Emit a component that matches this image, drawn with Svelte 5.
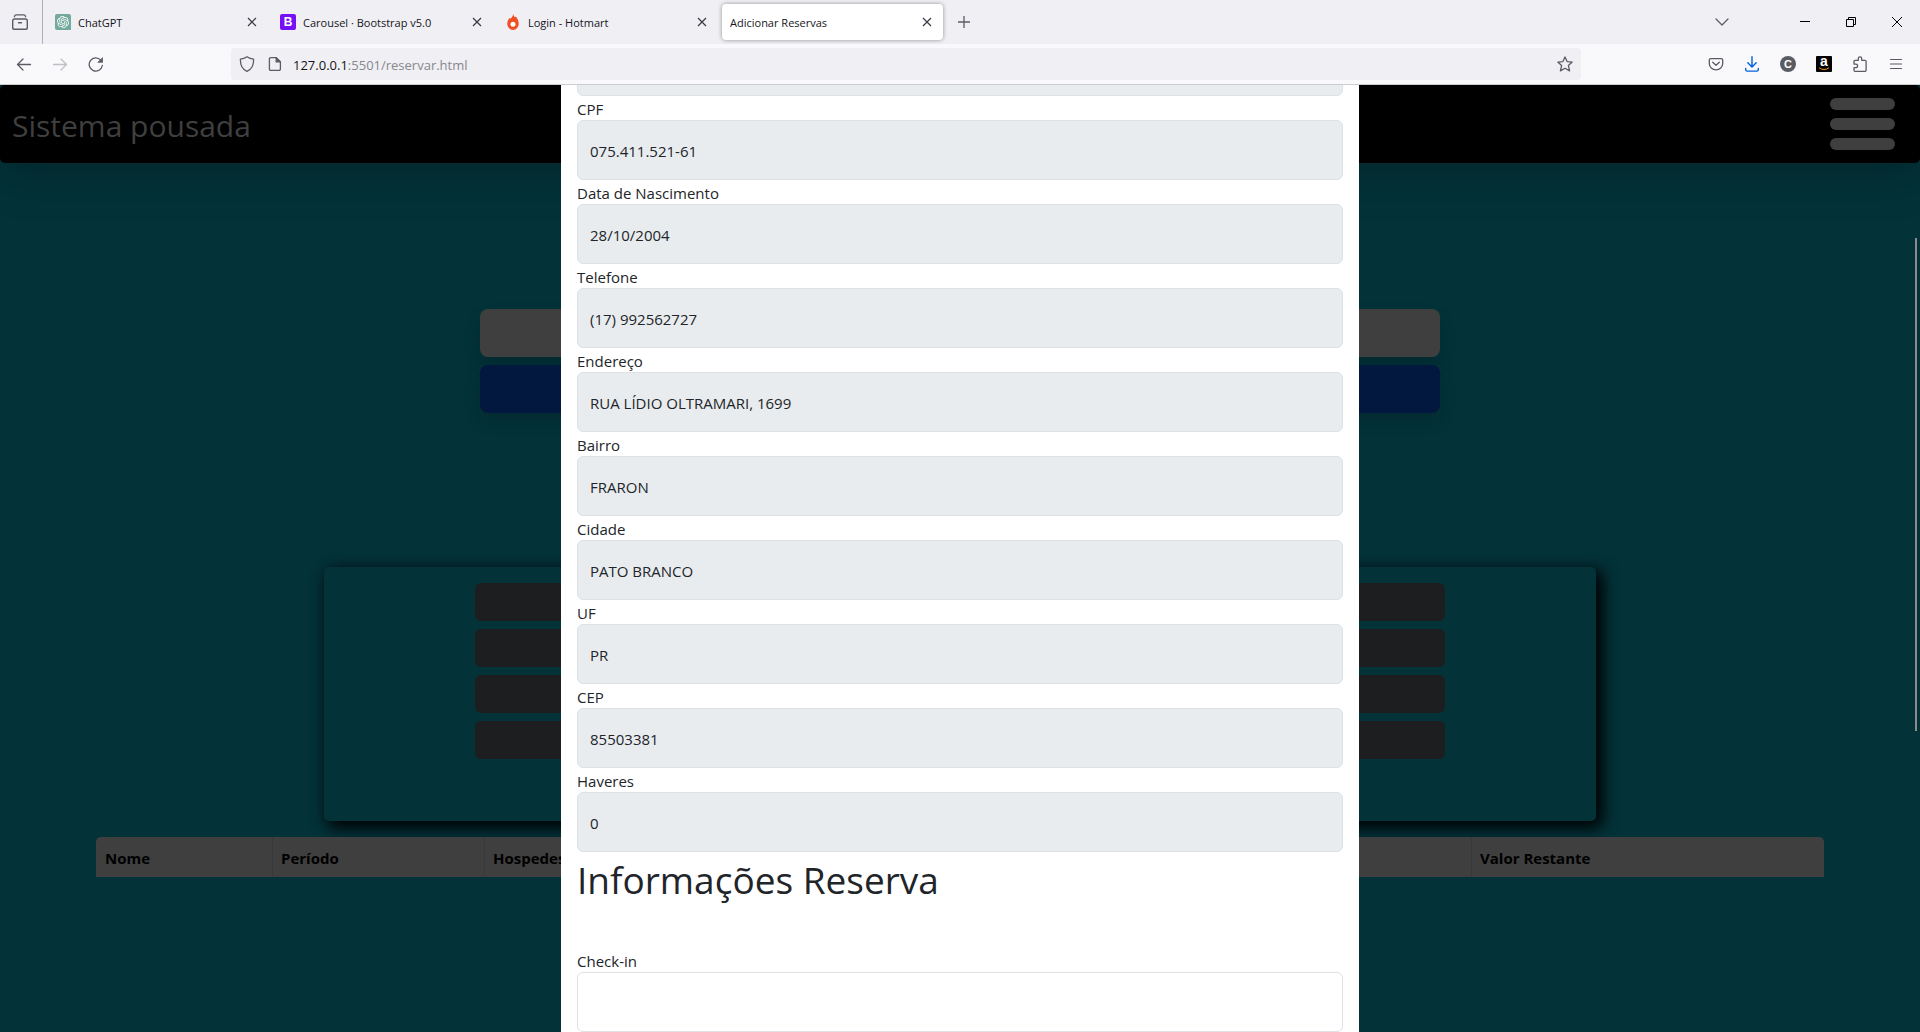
<script>
  const tabs = [
    { title: 'ChatGPT', icon: 'gpt' },
    { title: 'Carousel · Bootstrap v5.0', icon: 'bootstrap' },
    { title: 'Login - Hotmart', icon: 'hotmart' },
    { title: 'Adicionar Reservas', icon: null, active: true }
  ];

  const fields = [
    { id: 'cpf', label: 'CPF', value: '075.411.521-61' },
    { id: 'nascimento', label: 'Data de Nascimento', value: '28/10/2004' },
    { id: 'telefone', label: 'Telefone', value: '(17) 992562727' },
    { id: 'endereco', label: 'Endereço', value: 'RUA LÍDIO OLTRAMARI, 1699' },
    { id: 'bairro', label: 'Bairro', value: 'FRARON' },
    { id: 'cidade', label: 'Cidade', value: 'PATO BRANCO' },
    { id: 'uf', label: 'UF', value: 'PR' },
    { id: 'cep', label: 'CEP', value: '85503381' },
    { id: 'haveres', label: 'Haveres', value: '0' }
  ];

  let checkin = $state('');
</script>

<div class="window">
  <div class="tabbar">
    <button class="view" aria-label="Firefox View">
      <svg width="16" height="16" viewBox="0 0 16 16" fill="none" stroke="#5b5b66" stroke-linecap="round">
        <path d="M2.400 2.800c.1-1.200.9-1.900 2.100-1.900h7c1.200 0 2 .7 2.100 1.900" stroke-width="1.300" />
        <path d="M2.600 5h10.800a1.900 1.900 0 0 1 1.900 1.900v6.500a1.900 1.900 0 0 1-1.900 1.900H2.600A1.900 1.900 0 0 1 .7 13.400V6.900A1.900 1.900 0 0 1 2.600 5z" stroke-width="1.400" />
        <path d="M6.500 8.700h3" stroke-width="1.400" />
      </svg>
    </button>
    <div class="tabs">
      {#each tabs as tab}
        <div class="tab" class:active={tab.active}>
          {#if tab.icon === 'gpt'}
            <svg width="16" height="16" viewBox="0 0 16 16">
              <path d="M2 0h12a2 2 0 0 1 2 2v14H2a2 2 0 0 1-2-2V2a2 2 0 0 1 2-2z" fill="#74aa9c" />
              <g transform="translate(2 2) scale(.5)">
                <path fill="#fff" d="M22.2819 9.8211a5.9847 5.9847 0 0 0-.5157-4.9108 6.0462 6.0462 0 0 0-6.5098-2.9A6.0651 6.0651 0 0 0 4.9807 4.1818a5.9847 5.9847 0 0 0-3.9977 2.9 6.0462 6.0462 0 0 0 .7427 7.0966 5.98 5.98 0 0 0 .511 4.9107 6.051 6.051 0 0 0 6.5146 2.9001A5.9847 5.9847 0 0 0 13.2599 24a6.0557 6.0557 0 0 0 5.7718-4.2058 5.9894 5.9894 0 0 0 3.9977-2.9001 6.0557 6.0557 0 0 0-.7475-7.0729zm-9.022 12.6081a4.4755 4.4755 0 0 1-2.8764-1.0408l.1419-.0804 4.7783-2.7582a.7948.7948 0 0 0 .3927-.6813v-6.7369l2.02 1.1686a.071.071 0 0 1 .038.052v5.5826a4.504 4.504 0 0 1-4.4945 4.4944zm-9.6607-4.1254a4.4708 4.4708 0 0 1-.5346-3.0137l.142.0852 4.783 2.7582a.7712.7712 0 0 0 .7806 0l5.8428-3.3685v2.3324a.0804.0804 0 0 1-.0332.0615L9.74 19.9502a4.4992 4.4992 0 0 1-6.1408-1.6464zM2.3408 7.8956a4.485 4.485 0 0 1 2.3655-1.9728V11.6a.7664.7664 0 0 0 .3879.6765l5.8144 3.3543-2.0201 1.1685a.0757.0757 0 0 1-.071 0l-4.8303-2.7865A4.504 4.504 0 0 1 2.3408 7.872zm16.5963 3.8558L13.1038 8.364 15.1192 7.2a.0757.0757 0 0 1 .071 0l4.8303 2.7913a4.4944 4.4944 0 0 1-.6765 8.1042v-5.6772a.79.79 0 0 0-.407-.667zm2.0107-3.0231l-.142-.0852-4.7735-2.7818a.7759.7759 0 0 0-.7854 0L9.409 9.2297V6.8974a.0662.0662 0 0 1 .0284-.0615l4.8303-2.7866a4.4992 4.4992 0 0 1 6.6802 4.66zM8.3065 12.863l-2.02-1.1638a.0804.0804 0 0 1-.038-.0567V6.0742a4.4992 4.4992 0 0 1 7.3757-3.4537l-.142.0805L8.704 5.459a.7948.7948 0 0 0-.3927.6813zm1.0976-2.3654l2.602-1.4998 2.6069 1.4998v2.9994l-2.5974 1.4997-2.6067-1.4997Z" />
              </g>
            </svg>
          {:else if tab.icon === 'bootstrap'}
            <span class="bs" aria-hidden="true">B</span>
          {:else if tab.icon === 'hotmart'}
            <svg width="16" height="16" viewBox="0 0 16 16">
              <path d="M8.200 0c.3 1.600 1 2.500 1.900 3.300l.7-.9c1.600 1.800 2.900 4.500 2.900 7.200A5.700 6.100 0 0 1 8 16a5.700 6.100 0 0 1-5.700-6.400c0-2.500 1-4.300 2.200-5.700l.6.9C6.800 3.700 8 2.200 8.200 0z" fill="#f04e23" />
              <circle cx="8" cy="10.200" r="2.500" fill="#fff" />
            </svg>
          {/if}
          <span class="title">{tab.title}</span>
          <button class="close" aria-label="Fechar aba">
            <svg width="10" height="10" viewBox="0 0 10 10"><path d="M1 1l8 8M9 1L1 9" stroke="#3a3944" stroke-width="1.200" /></svg>
          </button>
        </div>
      {/each}
      <button class="plus" aria-label="Nova aba">
        <svg width="12" height="12" viewBox="0 0 12 12"><path d="M6 0v12M0 6h12" stroke="#5b5b66" stroke-width="1.300" /></svg>
      </button>
    </div>
    <button class="alltabs" aria-label="Listar abas">
      <svg width="14" height="8" viewBox="0 0 14 8" fill="none" stroke="#5b5b66" stroke-width="1.300" stroke-linecap="round" stroke-linejoin="round"><path d="M1 1l6 6 6-6" /></svg>
    </button>
    <div class="wincontrols">
      <button aria-label="Minimizar">
        <svg width="10" height="10" viewBox="0 0 10 10"><path d="M0 4.500h10" stroke="#000" /></svg>
      </button>
      <button aria-label="Restaurar">
        <svg width="10" height="10" viewBox="0 0 10 10" fill="none" stroke="#000"><path d="M.5 2.500h7v7h-7zM2.500 2.500v-2h7v7h-2" /></svg>
      </button>
      <button aria-label="Fechar">
        <svg width="10" height="10" viewBox="0 0 10 10"><path d="M0 0l10 10M10 0L0 10" stroke="#000" /></svg>
      </button>
    </div>
  </div>

  <div class="toolbar">
    <button class="tool" aria-label="Voltar">
      <svg width="16" height="16" viewBox="0 0 16 16" fill="none" stroke="#5b5b66" stroke-width="1.300" stroke-linecap="round" stroke-linejoin="round"><path d="M14.500 8.500H1.600M7 3L1.500 8.500 7 14" /></svg>
    </button>
    <button class="tool" aria-label="Avançar">
      <svg width="16" height="16" viewBox="0 0 16 16" fill="none" stroke="#bfbfc6" stroke-width="1.300" stroke-linecap="round" stroke-linejoin="round"><path d="M1.500 8.500h12.900M9 3l5.500 5.500L9 14" /></svg>
    </button>
    <button class="tool" aria-label="Recarregar">
      <svg width="16" height="16" viewBox="0 0 16 16" fill="none" stroke="#5b5b66" stroke-width="1.300" stroke-linecap="round"><path d="M14.300 9.500A6.600 6.600 0 1 1 12.800 4.200" /><path d="M14.500 2v4.300h-4.300z" fill="#5b5b66" stroke-linejoin="round" stroke-width=".8" /></svg>
    </button>
    <div class="urlbar">
      <svg width="16" height="16" viewBox="0 0 16 16" fill="none" stroke="#5b5b66" stroke-width="1.300" stroke-linejoin="round"><path d="M8 .8c2 1.400 4.200 2.200 6.600 2.400.2 6-2 10.200-6.600 12.100C3.400 13.400 1.200 9.200 1.400 3.200 3.800 3 6 2.200 8 .8z" /></svg>
      <svg width="16" height="16" viewBox="0 0 16 16" fill="none" stroke="#5b5b66" stroke-width="1.300" stroke-linejoin="round"><path d="M3.600 1.700h5.600l4.200 4.200v7.200a1.200 1.200 0 0 1-1.200 1.200H3.600a1.200 1.200 0 0 1-1.200-1.200V2.900a1.200 1.200 0 0 1 1.200-1.200z" /><path d="M9.200 1.700l4.200 4.200H9.200z" fill="#5b5b66" /></svg>
      <span class="url">127.0.0.1<span>:5501/reservar.html</span></span>
      <button class="star" aria-label="Favoritar">
        <svg width="16" height="16" viewBox="0 0 16 16" fill="none" stroke="#5b5b66" stroke-width="1.300" stroke-linejoin="round"><path d="M8 .9l2.100 4.700 5.100.5-3.800 3.500 1.200 5.300L8 12.300l-4.600 2.600 1.200-5.300L.8 6.100l5.100-.5z" /></svg>
      </button>
    </div>
    <button class="tool" aria-label="Pocket">
      <svg width="16" height="16" viewBox="0 0 16 16" fill="none" stroke="#5b5b66" stroke-width="1.300" stroke-linecap="round" stroke-linejoin="round"><path d="M2.800 2.600h10.400a1.500 1.500 0 0 1 1.500 1.500v3.400a6.700 6.300 0 0 1-13.400 0V4.100a1.500 1.500 0 0 1 1.500-1.500z" /><path d="M4.700 6.200L8 9.300l3.300-3.100" /></svg>
    </button>
    <button class="tool" aria-label="Downloads">
      <svg width="16" height="16" viewBox="0 0 16 16" fill="none" stroke="#0061e0" stroke-width="1.400" stroke-linecap="round" stroke-linejoin="round"><path d="M8 .8v9.800M3.800 6.800L8 11l4.200-4.200M1.700 12.500v1a1.600 1.600 0 0 0 1.600 1.600h9.400a1.600 1.600 0 0 0 1.600-1.600v-1" /></svg>
    </button>
    <button class="tool" aria-label="Conta"><span class="account">C</span></button>
    <button class="tool" aria-label="Amazon">
      <span class="amazon">a<svg width="12" height="4" viewBox="0 0 12 4" fill="none" stroke="#f90"><path d="M1 .8q5 3.400 10 0" /></svg></span>
    </button>
    <button class="tool" aria-label="Extensões">
      <svg width="16" height="16" viewBox="0 0 16 16" fill="none" stroke="#5b5b66" stroke-width="1.300" stroke-linejoin="round"><path d="M2 7V5.300a1 1 0 0 1 1-1h3.300V2.500a1.700 1.700 0 0 1 3.400 0v1.800h3.400a1 1 0 0 1 1 1v9a1 1 0 0 1-1 1H3a1 1 0 0 1-1-1v-2.600h1.800a1.600 1.600 0 0 0 0-3.600H2z" /></svg>
    </button>
    <button class="tool" aria-label="Menu">
      <svg width="16" height="16" viewBox="0 0 16 16" stroke="#5b5b66" stroke-width="1.200" stroke-linecap="round"><path d="M2.500 3.500h11M2.500 8h11M2.500 12.500h11" /></svg>
    </button>
  </div>

  <div class="page">
    <header class="navbar">
      <span class="brand">Sistema pousada</span>
      <button class="burger" aria-label="Abrir menu"><i></i><i></i><i></i></button>
    </header>

    <div class="search">
      <input type="text" aria-label="Pesquisar" />
      <button aria-label="Buscar"></button>
    </div>

    <div class="panel">
      <button aria-label="Opção 1"></button>
      <button aria-label="Opção 2"></button>
      <button aria-label="Opção 3"></button>
      <button aria-label="Opção 4"></button>
    </div>

    <table>
      <colgroup><col class="c1" /><col class="c2" /><col /><col class="c4" /></colgroup>
      <thead>
        <tr><th>Nome</th><th>Período</th><th>Hospedes</th><th>Valor Restante</th></tr>
      </thead>
    </table>

    <div class="overlay">
      <form class="modal">
        <input type="text" aria-label="Nome" readonly />
        {#each fields as f}
          <label for={f.id}>{f.label}</label>
          <input id={f.id} type="text" value={f.value} readonly />
        {/each}
        <h1>Informações Reserva</h1>
        <label for="checkin">Check-in</label>
        <input id="checkin" type="text" bind:value={checkin} />
      </form>
    </div>
    <div class="scrollthumb"></div>
  </div>
</div>

<style>
  :global(body) {
    margin: 0;
  }

  .window {
    display: flex;
    flex-direction: column;
    height: 100vh;
    overflow: hidden;
    font-family: 'Open Sans', 'Noto Sans', sans-serif;
    color: #212529;
  }

  .window * {
    box-sizing: border-box;
  }

  button {
    border: 0;
    padding: 0;
    background: none;
    font: inherit;
    color: inherit;
    display: flex;
    align-items: center;
    justify-content: center;
  }

  svg {
    flex: none;
    display: block;
  }

  /* Browser tab strip */
  .tabbar {
    display: flex;
    height: 44px;
    flex: none;
    background: #f0f0f4;
    font-size: 11px;
    color: #15141a;
  }

  .view {
    width: 43px;
    padding-right: 3px;
    border-right: 1px solid #b0b0b6;
  }

  .tabs {
    display: flex;
    flex: 1;
    min-width: 0;
    padding: 4px 0;
    gap: 4px;
    margin-left: 4px;
  }

  .tab {
    display: flex;
    align-items: center;
    gap: 7px;
    width: 221px;
    height: 36px;
    padding: 0 4px 0 8px;
    border-radius: 4px;
  }

  .tab.active {
    background: #fff;
    box-shadow: 0 0 4px rgba(0, 0, 0, 0.4);
  }

  .title {
    flex: 1;
    padding-top: 1px;
    white-space: nowrap;
    overflow: hidden;
  }

  .close {
    width: 24px;
    height: 24px;
  }

  .bs {
    width: 16px;
    height: 16px;
    border-radius: 2px;
    background: #7711f5;
    color: #fff;
    font-family: 'Liberation Sans', sans-serif;
    font-size: 12px;
    line-height: 16px;
    font-weight: 700;
    text-align: center;
  }

  .plus {
    width: 34px;
    height: 36px;
  }

  .alltabs {
    width: 40px;
    margin-right: 40px;
  }

  .wincontrols {
    display: flex;
  }

  .wincontrols button {
    width: 46px;
  }

  /* Browser toolbar */
  .toolbar {
    display: flex;
    align-items: center;
    gap: 4px;
    height: 41px;
    flex: none;
    padding: 0 8px;
    background: #f9f9fb;
    border-bottom: 1px solid #cccccf;
  }

  .tool {
    width: 32px;
    height: 32px;
    flex: none;
  }

  .urlbar {
    display: flex;
    align-items: center;
    flex: 1;
    min-width: 0;
    height: 32px;
    margin: 0 115px;
    padding: 0 8px;
    gap: 12px;
    border-radius: 4px;
    background: #f0f0f4;
  }

  .url {
    flex: 1;
    margin-left: -2px;
    padding-top: 2px;
    font-size: 13px;
    color: #15141a;
    white-space: nowrap;
  }

  .url span {
    color: #87878e;
  }

  .account {
    width: 16px;
    height: 16px;
    border-radius: 50%;
    background: #5b5b66;
    color: #fff;
    font-family: 'Liberation Sans', sans-serif;
    font-size: 11px;
    font-weight: 700;
    line-height: 16px;
    text-align: center;
  }

  .amazon {
    display: flex;
    flex-direction: column;
    align-items: center;
    width: 16px;
    height: 16px;
    border-radius: 1px;
    background: #000;
    color: #fff;
    font-family: 'Liberation Sans', sans-serif;
    font-size: 14px;
    font-weight: 700;
    line-height: 11px;
  }

  /* Page behind the dialog */
  .page {
    position: relative;
    flex: 1;
    min-height: 0;
    overflow: hidden;
    background: #033239;
  }

  .navbar {
    display: flex;
    align-items: center;
    justify-content: space-between;
    height: 78px;
    padding: 0 25px 0 12px;
    border-radius: 5px;
    background: #000;
    box-shadow: 0 8px 48px rgba(0, 0, 0, 0.25);
  }

  .brand {
    padding-top: 3px;
    font-size: 30px;
    line-height: 40px;
    color: #3f3f3f;
  }

  .burger {
    flex-direction: column;
    gap: 8px;
  }

  .burger i {
    width: 65px;
    height: 12px;
    border-radius: 6px;
    background: #3f3f3f;
  }

  .search {
    display: flex;
    flex-direction: column;
    gap: 8px;
    width: 50%;
    margin: 146px auto 0;
  }

  .search input,
  .search button {
    width: 100%;
    height: 48px;
    border: 0;
    border-radius: 8px;
    background: #3f3f3f;
    box-shadow: 0 8px 16px rgba(0, 0, 0, 0.15);
  }

  .search button {
    background: #03183f;
  }

  .panel {
    display: flex;
    flex-direction: column;
    align-items: center;
    gap: 8px;
    width: 1272px;
    max-width: 90%;
    height: 254px;
    margin: 154px auto 0;
    padding: 16px;
    border-radius: 5px;
    box-shadow: 5px 5px 16px 2px #000;
  }

  .panel button {
    width: 970px;
    max-width: 100%;
    height: 38px;
    border-radius: 6px;
    background: #1c1e1f;
  }

  table {
    width: 90%;
    margin: 16px auto 0;
    table-layout: fixed;
    border-collapse: separate;
    border-spacing: 0;
    border-radius: 5px 5px 0 0;
    background: #3f3f3f;
    position: relative;
  }

  .c1 {
    width: 177px;
  }

  .c2 {
    width: 212px;
  }

  .c4 {
    width: 352px;
  }

  th {
    padding: 9px 8px 7px;
    border-right: 1px solid #373839;
    font-size: 15px;
    line-height: 24px;
    text-align: left;
    color: #000;
  }

  th:first-child {
    padding-left: 9px;
  }

  th:last-child {
    border-right: 0;
  }

  /* Dialog, scrolled past most of its first field */
  .overlay {
    position: absolute;
    inset: 0;
    overflow: hidden;
  }

  .modal {
    width: 798px;
    max-width: 100%;
    margin: -49px auto 0;
    padding: 0 16px 16px;
    background: #fff;
  }

  .modal label {
    display: block;
    padding-top: 2px;
    font-size: 15px;
    line-height: 22px;
  }

  .modal input {
    display: block;
    width: 100%;
    height: 60px;
    padding: 2px 12px 0;
    border: 1px solid #dee2e6;
    border-radius: 6px;
    background: #fff;
    font: inherit;
    font-size: 15px;
    color: #212529;
  }

  .modal input:read-only {
    background: #e9ecef;
  }

  h1 {
    margin: 0 0 44px;
    padding-top: 4px;
    font-size: 37px;
    font-weight: 400;
    line-height: 48px;
  }

  .scrollthumb {
    position: absolute;
    top: 153px;
    right: 3px;
    width: 2px;
    height: 493px;
    background: #8b8b8b;
  }
</style>
